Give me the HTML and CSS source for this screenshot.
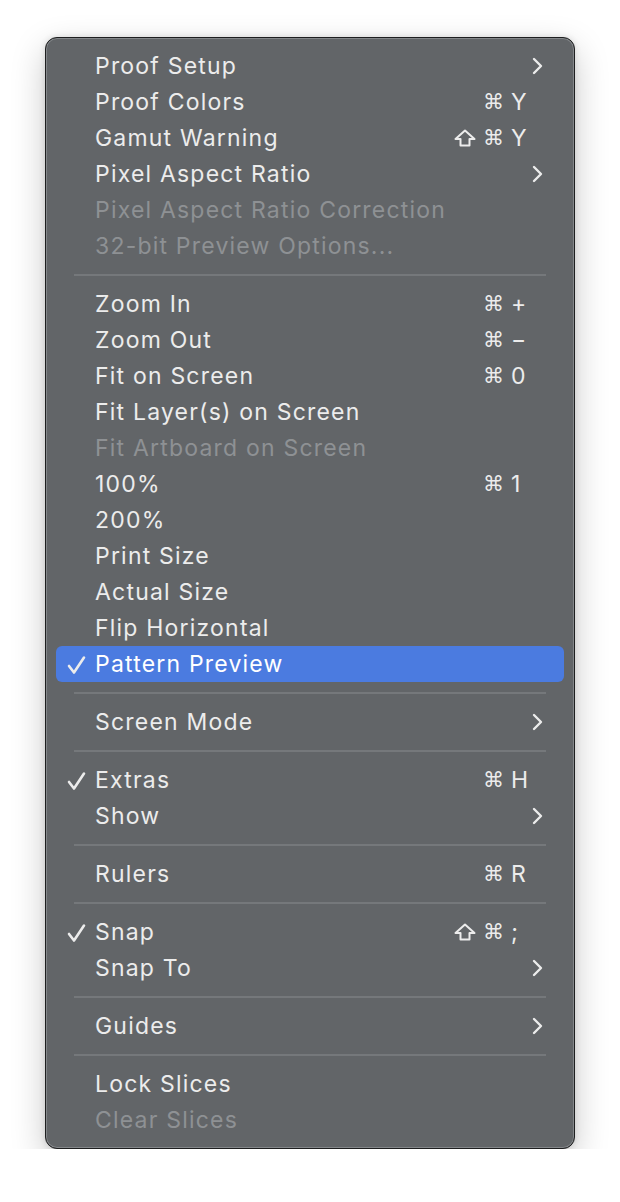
FILE: index.html
```html
<!DOCTYPE html>
<html lang="en">
<head>
  <meta charset="UTF-8">
  <meta name="viewport" content="width=device-width, initial-scale=1.0">
  <title>View Menu</title>
  <link rel="stylesheet" href="styles.css">
</head>
<body>

  <div class="menu">
    <div class="item"><span class="label">Proof Setup</span><span class="sub"><svg width="11" height="18" viewBox="0 0 11 18"><path d="M2 2 L9 9 L2 16" /></svg></span></div>
    <div class="item"><span class="label">Proof Colors</span><span class="mods">⌘</span><span class="key">Y</span></div>
    <div class="item"><span class="label">Gamut Warning</span><span class="mods"><svg class="shift" width="22" height="18" viewBox="0 0 22 18"><path d="M11 1.5 L20.5 10 H15.5 V16.5 H6.5 V10 H1.5 Z" /></svg>⌘</span><span class="key">Y</span></div>
    <div class="item"><span class="label">Pixel Aspect Ratio</span><span class="sub"><svg width="11" height="18" viewBox="0 0 11 18"><path d="M2 2 L9 9 L2 16" /></svg></span></div>
    <div class="item disabled"><span class="label">Pixel Aspect Ratio Correction</span></div>
    <div class="item disabled"><span class="label">32-bit Preview Options...</span></div>

    <div class="sep"></div>

    <div class="item"><span class="label">Zoom In</span><span class="mods">⌘</span><span class="key">+</span></div>
    <div class="item"><span class="label">Zoom Out</span><span class="mods">⌘</span><span class="key">−</span></div>
    <div class="item"><span class="label">Fit on Screen</span><span class="mods">⌘</span><span class="key">0</span></div>
    <div class="item"><span class="label">Fit Layer(s) on Screen</span></div>
    <div class="item disabled"><span class="label">Fit Artboard on Screen</span></div>
    <div class="item"><span class="label">100%</span><span class="mods">⌘</span><span class="key">1</span></div>
    <div class="item"><span class="label">200%</span></div>
    <div class="item"><span class="label">Print Size</span></div>
    <div class="item"><span class="label">Actual Size</span></div>
    <div class="item"><span class="label">Flip Horizontal</span></div>
    <div class="item selected checked"><span class="check"><svg width="19" height="20" viewBox="0 0 19 20"><path d="M2 11 L7 17.5 L17 2.5" /></svg></span><span class="label">Pattern Preview</span></div>

    <div class="sep"></div>

    <div class="item"><span class="label">Screen Mode</span><span class="sub"><svg width="11" height="18" viewBox="0 0 11 18"><path d="M2 2 L9 9 L2 16" /></svg></span></div>

    <div class="sep"></div>

    <div class="item checked"><span class="check"><svg width="19" height="20" viewBox="0 0 19 20"><path d="M2 11 L7 17.5 L17 2.5" /></svg></span><span class="label">Extras</span><span class="mods">⌘</span><span class="key">H</span></div>
    <div class="item"><span class="label">Show</span><span class="sub"><svg width="11" height="18" viewBox="0 0 11 18"><path d="M2 2 L9 9 L2 16" /></svg></span></div>

    <div class="sep"></div>

    <div class="item"><span class="label">Rulers</span><span class="mods">⌘</span><span class="key">R</span></div>

    <div class="sep"></div>

    <div class="item checked"><span class="check"><svg width="19" height="20" viewBox="0 0 19 20"><path d="M2 11 L7 17.5 L17 2.5" /></svg></span><span class="label">Snap</span><span class="mods"><svg class="shift" width="22" height="18" viewBox="0 0 22 18"><path d="M11 1.5 L20.5 10 H15.5 V16.5 H6.5 V10 H1.5 Z" /></svg>⌘</span><span class="key">;</span></div>
    <div class="item"><span class="label">Snap To</span><span class="sub"><svg width="11" height="18" viewBox="0 0 11 18"><path d="M2 2 L9 9 L2 16" /></svg></span></div>

    <div class="sep"></div>

    <div class="item"><span class="label">Guides</span><span class="sub"><svg width="11" height="18" viewBox="0 0 11 18"><path d="M2 2 L9 9 L2 16" /></svg></span></div>

    <div class="sep"></div>

    <div class="item"><span class="label">Lock Slices</span></div>
    <div class="item disabled"><span class="label">Clear Slices</span></div>
  </div>

</body>
</html>
```

FILE: styles.css
```css
body {
  margin: 0;
  background-color: #ffffff;
  font-family: Inter, "Liberation Sans", sans-serif;
}

.menu {
  box-sizing: border-box;
  width: 530px;
  margin: 37px 0 0 45px;
  padding: 10px;
  background-color: #626568;
  border: 1px solid #1e1f20;
  border-radius: 12px;
  box-shadow: inset 0 0 0 1px #84878a, 0 12px 34px rgba(0, 0, 0, 0.22), 0 0 6px rgba(0, 0, 0, 0.12);
}

.item {
  position: relative;
  display: flex;
  align-items: center;
  height: 36px;
  padding: 0 21px 0 39px;
  border-radius: 6px;
  color: #ececec;
  font-size: 23px;
  letter-spacing: 1.2px;
}

.item.selected {
  background-color: #4b7be0;
  color: #ffffff;
}

.item.disabled {
  color: #8e9194;
}

.label {
  flex: 1;
  white-space: nowrap;
  line-height: 34px;
}

.check {
  position: absolute;
  left: 11px;
  top: 7px;
  width: 19px;
  height: 20px;
}

.check svg path {
  fill: none;
  stroke: #ececec;
  stroke-width: 2.6;
  stroke-linecap: round;
  stroke-linejoin: round;
}

.mods {
  display: flex;
  align-items: center;
  gap: 7px;
  font-family: "DejaVu Sans", sans-serif;
  font-size: 21px;
  letter-spacing: 0;
  margin-right: 7px;
}

.shift path {
  fill: none;
  stroke: #ececec;
  stroke-width: 2;
  stroke-linejoin: round;
}

.key {
  width: 32px;
  font-size: 23px;
  letter-spacing: 0;
}

.sub {
  width: 32px;
  display: flex;
  justify-content: flex-end;
}

.sub svg {
  display: block;
}

.sub svg path {
  fill: none;
  stroke: #ececec;
  stroke-width: 2.4;
  stroke-linecap: round;
  stroke-linejoin: round;
}

.sep {
  height: 2px;
  margin: 10px 18px;
  background-color: #75787b;
}
```
